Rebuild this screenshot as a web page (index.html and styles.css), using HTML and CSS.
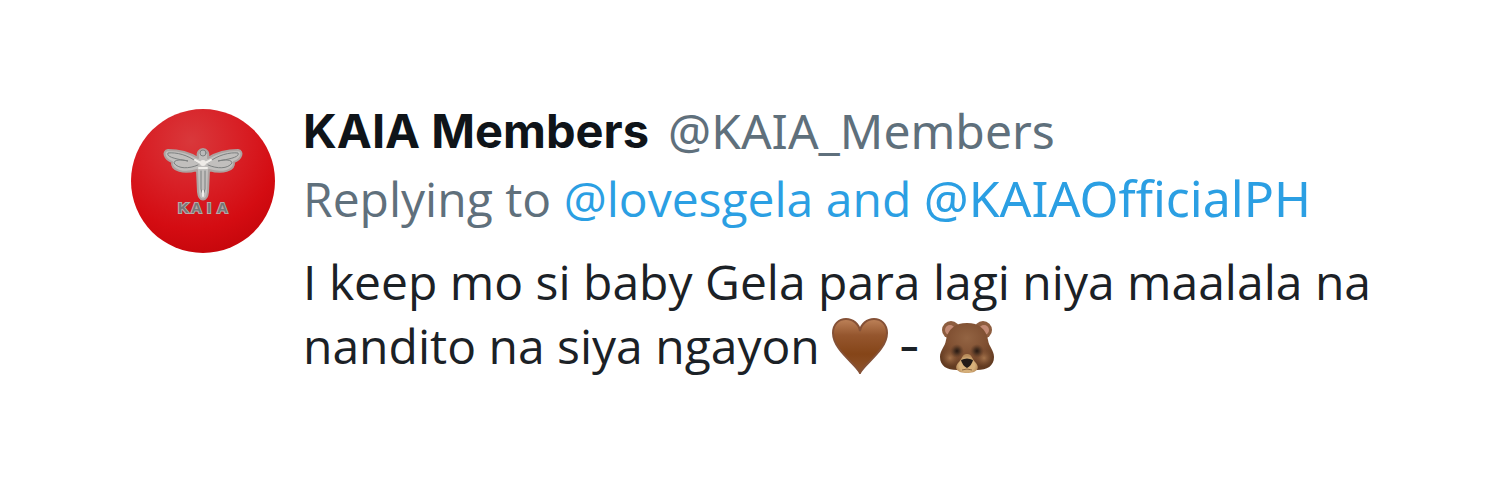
FILE: index.html
```html
<!DOCTYPE html>
<html lang="tl">
<head>
<meta charset="utf-8">
<meta name="viewport" content="width=device-width, initial-scale=1">
<title>KAIA Members</title>
<link rel="stylesheet" href="styles.css">
</head>
<body>
<article class="post">
  <svg class="avatar" viewBox="0 0 144 144" role="img" aria-label="KAIA">
    <defs>
      <radialGradient id="disc" cx="42%" cy="22%" r="82%">
        <stop offset="0" stop-color="#d9383b"/>
        <stop offset=".4" stop-color="#d82026"/>
        <stop offset=".75" stop-color="#d40c12"/>
        <stop offset="1" stop-color="#c5060b"/>
      </radialGradient>
    </defs>
    <circle cx="72" cy="72" r="72" fill="url(#disc)"/>
    <g stroke-linejoin="round" stroke-linecap="round">
      <path d="M67 49C59 44 47 41 37 41C31 42 33 50 41 53C40 62 53 65 66 61L67 83C68 93 76 93 77 83L78 61C91 65 104 62 103 53C111 50 113 42 107 41C97 41 85 44 77 49C80 37 64 37 67 49Z" fill="#c1bfbd" stroke="#ada2a0" stroke-width="2"/>
      <path d="M66 53C57 46 45 43 37 44C35 48 45 50 57 52C49 50 43 51 43 54C47 60 58 60 67 56M78 53C87 46 99 43 107 44C109 48 99 50 87 52C95 50 101 51 101 54C97 60 86 60 77 56M70 62V80Q72 89 74 80V62" fill="none" stroke="#7d8080" stroke-width="1"/>
      <circle cx="72" cy="44" r="3" fill="#bbb" stroke="#7d8080"/>
      <path d="M64 51L70 54M80 51L74 54M68 59H76M72 82V87" fill="none" stroke="#f1efeb" stroke-width="2"/>
      <circle cx="72" cy="54" r="3" fill="#eeebe7"/>
    </g>
    <text class="logo-text" x="47 60 76 86" y="104">KAIA</text>
  </svg>
  <div class="content">
    <header class="author">
      <a class="name" href="#">KAIA Members</a>
      <a class="handle" href="#">@KAIA_Members</a>
    </header>
    <p class="reply">Replying to <a href="#">@lovesgela</a> <span class="joiner">and</span> <a class="official" href="#">@KAIAOfficialPH</a></p>
    <p class="message">I keep mo si baby Gela para lagi niya maalala na nandito na siya ngayon
      <svg class="emoji" viewBox="0 0 56 56" role="img" aria-label="Brown heart">
        <defs>
          <linearGradient id="heart" x2="0" y2="1">
            <stop offset="0" stop-color="#bd8259"/>
            <stop offset=".3" stop-color="#95562e"/>
            <stop offset=".65" stop-color="#854518"/>
            <stop offset="1" stop-color="#8e532d"/>
          </linearGradient>
        </defs>
        <path d="M28 55C24 46 1 32 1 15C1 6 7 1 14 1C21 1 27 6 28 13C29 6 35 1 42 1C49 1 55 6 55 15C55 32 32 46 28 55Z" fill="url(#heart)" stroke="#855136" stroke-width="2"/>
      </svg><span class="dash">-</span><svg class="emoji" viewBox="0 0 56 56" role="img" aria-label="Bear">
        <defs>
          <radialGradient id="fur" cx="50%" cy="32%" r="66%">
            <stop offset="0" stop-color="#936443"/>
            <stop offset=".55" stop-color="#805032"/>
            <stop offset="1" stop-color="#623b21"/>
          </radialGradient>
          <radialGradient id="cheek"><stop offset="0" stop-color="#a5744c"/><stop offset="1" stop-color="#815334" stop-opacity="0"/></radialGradient>
          <radialGradient id="eye"><stop offset="0" stop-color="#271913"/><stop offset=".4" stop-color="#4d3322"/><stop offset="1" stop-color="#643f28" stop-opacity="0"/></radialGradient>
          <radialGradient id="muzzle" cy="60%"><stop offset="0" stop-color="#d9b27b"/><stop offset=".7" stop-color="#d6b07a"/><stop offset="1" stop-color="#b98d5c"/></radialGradient>
        </defs>
        <circle cx="12" cy="12" r="9" fill="#8d5d3f"/>
        <circle cx="44" cy="12" r="9" fill="#8d5d3f"/>
        <circle cx="11" cy="12" r="5" fill="#c38a74"/>
        <circle cx="45" cy="12" r="5" fill="#c38a74"/>
        <path d="M28 5C16 5 9 11 7 22C6 29 1 32 1 39C1 48 8 52 18 52H38C48 52 55 48 55 39C55 32 50 29 49 22C47 11 40 5 28 5Z" fill="url(#fur)"/>
        <circle cx="11" cy="40" r="9" fill="url(#cheek)"/>
        <circle cx="45" cy="40" r="9" fill="url(#cheek)"/>
        <circle cx="18" cy="33" r="7" fill="url(#eye)"/>
        <circle cx="38" cy="33" r="7" fill="url(#eye)"/>
        <path d="M28 36C23 36 23 41 20 44C14 50 18 55 28 55C38 55 42 50 36 44C33 41 33 36 28 36Z" fill="url(#muzzle)"/>
        <path d="M22 42Q28 39 34 42Q33 47 28 50Q23 47 22 42Z" fill="#221b18"/>
        <path d="M23 52Q28 50 33 52" fill="none" stroke="#8a6540" stroke-width="1"/>
      </svg>
    </p>
  </div>
</article>
</body>
</html>
```
FILE: styles.css
```css
* { box-sizing: border-box; }
body { margin: 0; background: #fff; color: #1b2126; font: 48px/64px "Open Sans", sans-serif; }
a { color: inherit; text-decoration: none; }
p { margin: 0; }
.post { display: flex; align-items: flex-start; gap: 28px; padding: 99px 96px 100px 131px; }
.avatar { flex: none; width: 144px; height: 144px; margin-top: 10px; }
.logo-text { font: bold 15px "Liberation Sans", sans-serif; fill: #777; stroke: #b5aaa8; stroke-width: 2px; paint-order: stroke; }
.content { flex: 1; min-width: 0; }
.author { display: flex; gap: 19px; white-space: nowrap; }
.name { color: #0f1419; font-family: Inter, sans-serif; font-size: 47px; font-weight: 700; }
.handle { color: #5f707c; font-family: "Noto Sans", sans-serif; }
.reply { margin-top: 4px; color: #5f707c; }
.reply a, .joiner { color: #2b9fe3; }
.reply .official { font-family: "Noto Sans", sans-serif; font-size: 50px; line-height: 48px; font-variant-ligatures: none; }
.message { margin-top: 19px; }
.emoji { width: 56px; height: 56px; vertical-align: -10px; }
.dash { margin: 0 19px 0 10px; font-family: Inter, sans-serif; line-height: 48px; }
```
